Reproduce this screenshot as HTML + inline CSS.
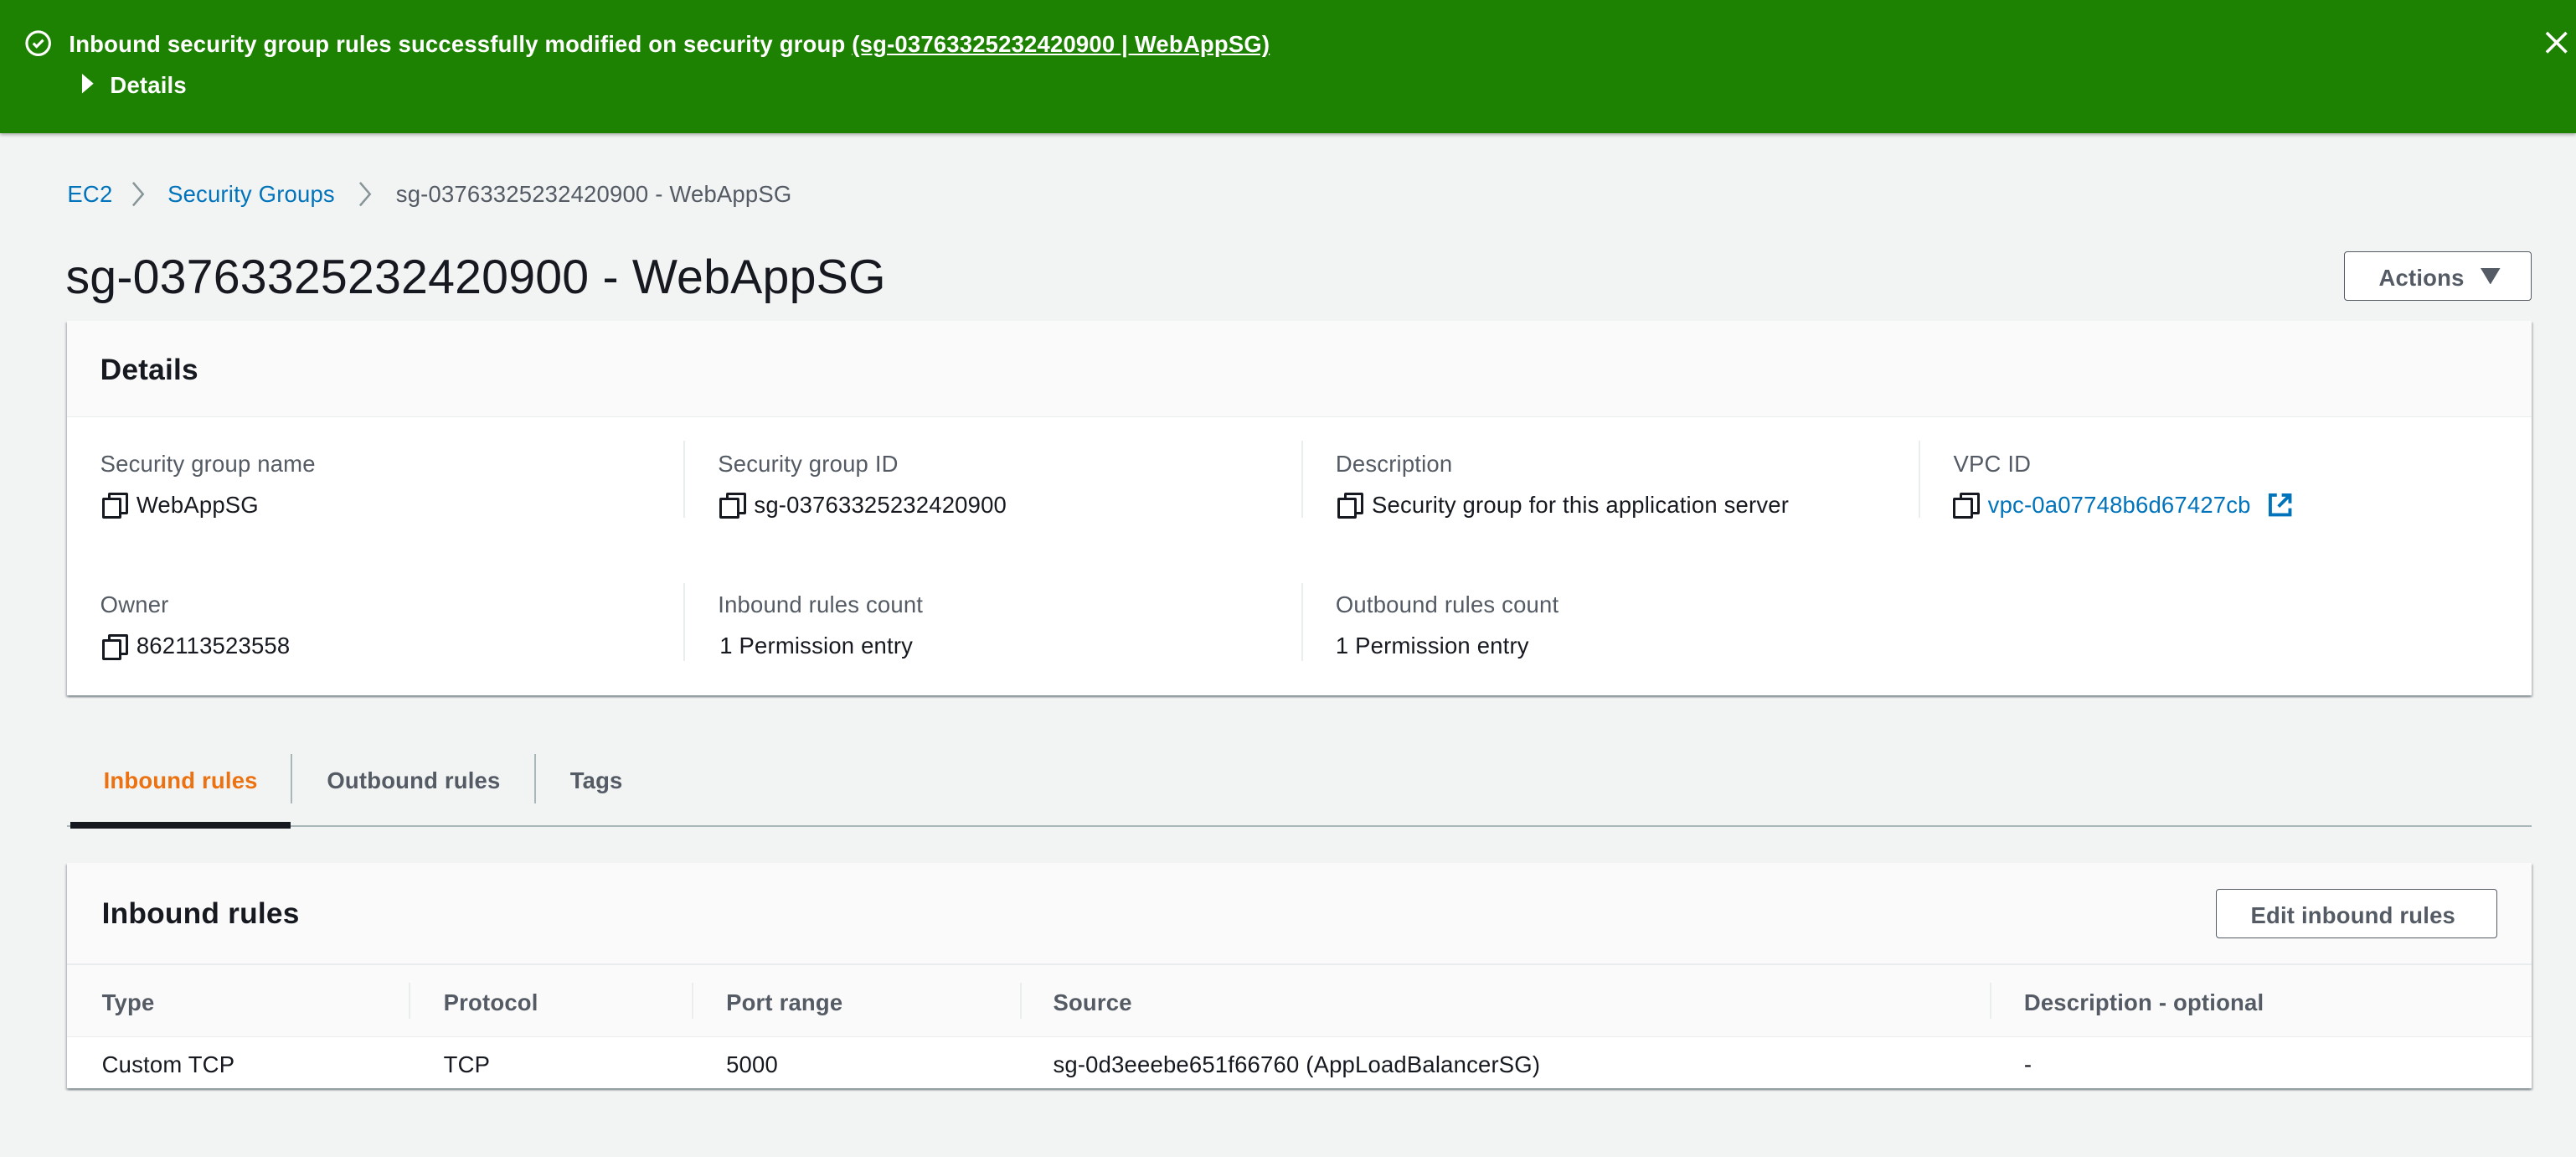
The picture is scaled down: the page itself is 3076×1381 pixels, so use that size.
<!DOCTYPE html>
<html><head><meta charset="utf-8"><style>
*{box-sizing:border-box;margin:0;padding:0}
html,body{width:3076px;height:1381px;overflow:hidden;background:#f2f3f3}
#w{zoom:1.9617;width:1568px;height:704px;position:relative;font-family:"Liberation Sans",sans-serif;font-size:14px;color:#16191f;letter-spacing:0.1px}
.a{position:absolute;white-space:nowrap}
.t{margin-top:1px}
.lbl{color:#545b64}
.blue{color:#0073bb}
.b{font-weight:bold}
.copy{display:inline-block;width:13px;height:13px;position:relative;vertical-align:-1px;margin-right:8px}
.copy:before{content:"";position:absolute;left:4px;top:0;width:9px;height:10px;border:2px solid #16191f;border-radius:1px}
.copy:after{content:"";position:absolute;left:0;top:3px;width:9px;height:10px;border:2px solid #16191f;background:#fff;border-radius:1px}
</style></head><body><div id="w">
<div class="a" style="left:0;top:0;width:1568px;height:81px;background:#1d8102;box-shadow:0 1px 2px rgba(0,0,0,.3)"></div>
<svg class="a" style="left:15px;top:18px" width="17" height="17" viewBox="0 0 17 17"><circle cx="8.5" cy="8.5" r="7" fill="none" stroke="#fff" stroke-width="1.6"/><path d="M5.5 8.5l2 2 4-4" fill="none" stroke="#fff" stroke-width="1.6"/></svg>
<div class="a b" style="left:42px;top:19px;color:#fff">Inbound security group rules successfully modified on security group <u>(sg-03763325232420900 | WebAppSG)</u></div>
<svg class="a" style="left:49px;top:45px" width="9" height="12"><path d="M1 0l7 6-7 6z" fill="#fff"/></svg>
<div class="a b" style="left:67px;top:44px;color:#fff">Details</div>
<svg class="a" style="left:1549px;top:19px" width="14" height="14"><path d="M1 1l12 12M13 1L1 13" stroke="#fff" stroke-width="1.8"/></svg>

<div class="a blue" style="left:41px;top:110px">EC2</div>
<svg class="a" style="left:79px;top:110px" width="10" height="16"><path d="M2 1l6 7-6 7" fill="none" stroke="#879596" stroke-width="1.3"/></svg>
<div class="a blue" style="left:102px;top:110px">Security Groups</div>
<svg class="a" style="left:217px;top:110px" width="10" height="16"><path d="M2 1l6 7-6 7" fill="none" stroke="#879596" stroke-width="1.3"/></svg>
<div class="a" style="left:241px;top:110px;color:#545b64">sg-03763325232420900 - WebAppSG</div>
<div class="a" style="left:40px;top:152px;font-size:29.2px">sg-03763325232420900 - WebAppSG</div>
<div class="a" style="left:1427px;top:153px;width:114px;height:30px;border:1px solid #545b64;border-radius:2px;background:#fff"></div>
<div class="a b" style="left:1448px;top:161px;color:#545b64">Actions</div>
<svg class="a" style="left:1510px;top:163px" width="12" height="10"><path d="M0 0h12l-6 10z" fill="#545b64"/></svg>

<div class="a" style="left:41px;top:195px;width:1500px;height:228px;background:#fff;box-shadow:0 1px 1px rgba(0,28,36,.3),1px 1px 1px rgba(0,28,36,.15),-1px 1px 1px rgba(0,28,36,.15)"></div>
<div class="a" style="left:41px;top:195px;width:1500px;height:59px;background:#fafafa;border-bottom:1px solid #eaeded"></div>
<div class="a b" style="left:61px;top:215px;font-size:18px">Details</div>
<div class="a" style="left:416px;top:268px;width:1px;height:47px;background:#eaeded"></div>
<div class="a" style="left:792px;top:268px;width:1px;height:47px;background:#eaeded"></div>
<div class="a" style="left:1168px;top:268px;width:1px;height:47px;background:#eaeded"></div>
<div class="a" style="left:416px;top:355px;width:1px;height:47px;background:#eaeded"></div>
<div class="a" style="left:792px;top:355px;width:1px;height:47px;background:#eaeded"></div>
<div class="a lbl" style="left:61px;top:274px">Security group name</div>
<div class="a" style="left:62px;top:299px"><span class="copy"></span>WebAppSG</div>
<div class="a lbl" style="left:437px;top:274px">Security group ID</div>
<div class="a" style="left:438px;top:299px"><span class="copy"></span>sg-03763325232420900</div>
<div class="a lbl" style="left:813px;top:274px">Description</div>
<div class="a" style="left:814px;top:299px"><span class="copy"></span>Security group for this application server</div>
<div class="a lbl" style="left:1189px;top:274px">VPC ID</div>
<div class="a" style="left:1189px;top:299px"><span class="copy"></span><span class="blue">vpc-0a07748b6d67427cb</span></div>
<svg class="a" style="left:1380px;top:299px" width="16" height="16"><path d="M6 2H2v12h12v-4" fill="none" stroke="#0073bb" stroke-width="2"/><path d="M9 2h5v5M14 2L7 9" fill="none" stroke="#0073bb" stroke-width="2"/></svg>
<div class="a lbl" style="left:61px;top:360px">Owner</div>
<div class="a" style="left:62px;top:385px"><span class="copy"></span>862113523558</div>
<div class="a lbl" style="left:437px;top:360px">Inbound rules count</div>
<div class="a" style="left:438px;top:385px">1 Permission entry</div>
<div class="a lbl" style="left:813px;top:360px">Outbound rules count</div>
<div class="a" style="left:813px;top:385px">1 Permission entry</div>

<div class="a b" style="left:63px;top:467px;color:#ec7211">Inbound rules</div>
<div class="a" style="left:177px;top:459px;width:1px;height:30px;background:#aab7b8"></div>
<div class="a b" style="left:199px;top:467px;color:#545b64">Outbound rules</div>
<div class="a" style="left:325px;top:459px;width:1px;height:30px;background:#aab7b8"></div>
<div class="a b" style="left:347px;top:467px;color:#545b64">Tags</div>
<div class="a" style="left:41px;top:502px;width:1500px;height:1px;background:#aab7b8"></div>
<div class="a" style="left:43px;top:500px;width:134px;height:4px;background:#16191f"></div>

<div class="a" style="left:41px;top:525px;width:1500px;height:137px;background:#fff;box-shadow:0 1px 1px rgba(0,28,36,.3),1px 1px 1px rgba(0,28,36,.15),-1px 1px 1px rgba(0,28,36,.15)"></div>
<div class="a" style="left:41px;top:525px;width:1500px;height:106px;background:#fafafa;border-bottom:1px solid #eaeded"></div>
<div class="a" style="left:41px;top:586px;width:1500px;height:1px;background:#eaeded"></div>
<div class="a b" style="left:62px;top:546px;font-size:18px">Inbound rules</div>
<div class="a" style="left:1349px;top:541px;width:171px;height:30px;border:1px solid #545b64;border-radius:2px;background:#fff"></div>
<div class="a b" style="left:1370px;top:549px;color:#545b64">Edit inbound rules</div>
<div class="a b" style="left:62px;top:602px;color:#545b64">Type</div>
<div class="a" style="left:249px;top:598px;width:1px;height:22px;background:#eaeded"></div>
<div class="a b" style="left:270px;top:602px;color:#545b64">Protocol</div>
<div class="a" style="left:421px;top:598px;width:1px;height:22px;background:#eaeded"></div>
<div class="a b" style="left:442px;top:602px;color:#545b64">Port range</div>
<div class="a" style="left:621px;top:598px;width:1px;height:22px;background:#eaeded"></div>
<div class="a b" style="left:641px;top:602px;color:#545b64">Source</div>
<div class="a" style="left:1211px;top:598px;width:1px;height:22px;background:#eaeded"></div>
<div class="a b" style="left:1232px;top:602px;color:#545b64">Description - optional</div>
<div class="a" style="left:62px;top:640px">Custom TCP</div>
<div class="a" style="left:270px;top:640px">TCP</div>
<div class="a" style="left:442px;top:640px">5000</div>
<div class="a" style="left:641px;top:640px">sg-0d3eeebe651f66760 (AppLoadBalancerSG)</div>
<div class="a" style="left:1232px;top:640px">-</div>
</div></body></html>
